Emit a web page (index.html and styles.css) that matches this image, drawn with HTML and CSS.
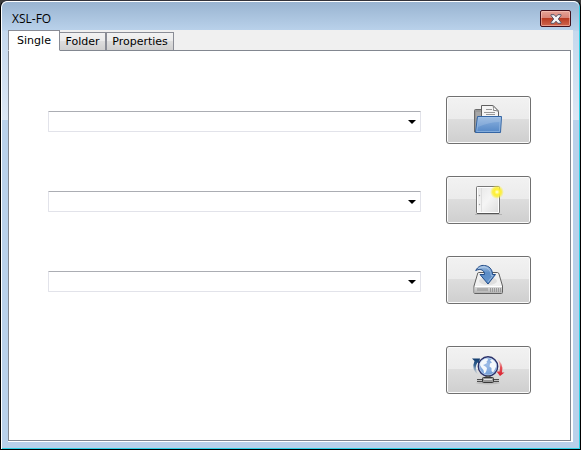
FILE: index.html
```html
<!DOCTYPE html>
<html lang="en">

<head>
  <meta charset="UTF-8">
  <meta name="viewport" content="width=device-width, initial-scale=1.0">
  <title>XSL-FO</title>
  <link rel="stylesheet" href="styles.css">
</head>

<body>
  <div class="window">
    <!-- Title bar -->
    <header class="titlebar">
      <h1>XSL-FO</h1>
      <button type="button" class="close" aria-label="Close">
        <svg width="12" height="10" viewBox="0 0 12 10">
          <path d="M1 .7H4.2L6 2.800 7.800 .7H11V1.600L8.300 5 11 8.400V9.300H7.800L6 7.200 4.200 9.300H1V8.400L3.700 5 1 1.600Z" fill="#f4f4f6" stroke="#575668" />
        </svg>
      </button>
    </header>

    <main class="client">
      <!-- Tabs -->
      <div class="tabs" role="tablist">
        <button type="button" class="tab active" role="tab" aria-selected="true">Single</button>
        <button type="button" class="tab folder" role="tab" aria-selected="false">Folder</button>
        <button type="button" class="tab properties" role="tab" aria-selected="false">Properties</button>
      </div>

      <form class="panel" role="tabpanel">
        <div class="row">
          <div class="combo">
            <select id="source" aria-label="Source file">
              <option></option>
            </select>
          </div>
          <button type="button" class="action" aria-label="Open">
            <svg width="31" height="32" viewBox="0 0 31 32">
              <defs>
                <linearGradient id="folderBlue" x1="0" y1="0" x2="0" y2="1">
                  <stop offset="0" stop-color="#8fb4e0" />
                  <stop offset="1" stop-color="#5487c6" />
                </linearGradient>
              </defs>
              <path d="M1.500 28V6.500Q1.500 5.500 2.500 5.500H8L10 7.500H25V28Z" fill="#989898" stroke="#6b6b6b" />
              <path d="M3 9H8M3 11H8M3 13H8" stroke="#b5b5b5" />
              <path d="M8.500 18V1.500H20L25.500 7V18Z" fill="#f5f5f5" stroke="#606060" />
              <path d="M20 1.500Q21 5 20.500 6.500 23 6 25.500 7.500Z" fill="#fff" stroke="#888" />
              <path d="M13 5.500H19M11 8.500H22M13 10.500H22" stroke="#999" />
              <path d="M4.500 12.500H28.500L27.500 28.500H2.500Z" fill="url(#folderBlue)" stroke="#3465a4" stroke-linejoin="round" />
              <path d="M5.500 13.500H27.400L26.500 27.500H3.700Z" fill="none" stroke="#c3dbf5" stroke-opacity=".4" />
              <path d="M6 14H27L26.500 18Q17 18 5 23Z" fill="#fff" fill-opacity=".15" />
            </svg>
          </button>
        </div>

        <div class="row">
          <div class="combo">
            <select id="stylesheet" aria-label="Stylesheet">
              <option></option>
            </select>
          </div>
          <button type="button" class="action" aria-label="New">
            <svg width="31" height="32" viewBox="0 0 31 32">
              <defs>
                <linearGradient id="paper" x1="0" y1="0" x2="1" y2="1">
                  <stop offset="0" stop-color="#e6e6e6" />
                  <stop offset=".5" stop-color="#f5f5f5" />
                  <stop offset="1" stop-color="#dcdcdc" />
                </linearGradient>
                <radialGradient id="glow">
                  <stop offset="0" stop-color="#fffff0" />
                  <stop offset=".2" stop-color="#fff980" />
                  <stop offset=".4" stop-color="#fff030" />
                  <stop offset=".65" stop-color="#fbee30" stop-opacity=".8" />
                  <stop offset="1" stop-color="#fff040" stop-opacity="0" />
                </radialGradient>
              </defs>
              <path d="M2 30.500H29" stroke="#000" stroke-opacity=".15" />
              <rect x="3.500" y="2.500" width="23" height="27" rx="1" fill="url(#paper)" stroke="#777" />
              <path d="M4 29.500H26" stroke="#555" />
              <path d="M4.500 28.500V3.500H25.500V28.500Z" fill="none" stroke="#fff" />
              <path d="M8.500 4V28" stroke="#dedede" />
              <circle cx="6.500" cy="11.500" r=".7" fill="#aaa" />
              <circle cx="6.500" cy="20.500" r=".7" fill="#aaa" />
              <circle cx="24" cy="8" r="7" fill="url(#glow)" />
            </svg>
          </button>
        </div>

        <div class="row">
          <div class="combo">
            <select id="output" aria-label="Output file">
              <option></option>
            </select>
          </div>
          <button type="button" class="action" aria-label="Save">
            <svg width="31" height="32" viewBox="0 0 31 32">
              <defs>
                <linearGradient id="driveSide" x1="0" y1="0" x2="0" y2="1">
                  <stop offset="0" stop-color="#dadada" />
                  <stop offset="1" stop-color="#b5b5b5" />
                </linearGradient>
                <linearGradient id="arrowBlue" x1="0" y1="0" x2="0" y2="1">
                  <stop offset="0" stop-color="#a9c5e4" />
                  <stop offset=".4" stop-color="#5b8cc6" />
                  <stop offset="1" stop-color="#6596cf" />
                </linearGradient>
              </defs>
              <path d="M5.500 8.500H24.500Q25.500 8.500 26 10L29.500 22V28.500Q29.500 29.500 28.500 29.500H2Q1 29.500 1 28.500V22L4.500 10Q4.700 8.500 5.500 8.500Z" fill="#f1f1f1" stroke="#606060" />
              <path d="M1.500 22.500H29V28.500Q29 29 28.500 29H2Q1.500 29 1.500 28.500Z" fill="url(#driveSide)" />
              <path d="M2 22.500H29" stroke="#fff" />
              <ellipse cx="15" cy="17" rx="9" ry="4" fill="#dedede" />
              <path d="M4 25.500H15" stroke="#999" stroke-width="3" stroke-opacity=".6" />
              <path d="M17.500 24V28M19.500 24V28M21.500 24V28M23.500 24V28M25.500 24V28M27.500 24V28" stroke="#999" />
              <path d="M2.700 6.500C5 2.500 8 1 11.500 1.500 16 2 19.500 5 19.500 10.500H22.500L15 20 7 10.500H11.500C11.500 6.500 8 4 2.700 6.500Z" fill="url(#arrowBlue)" stroke="#204a87" stroke-linejoin="round" />
              <path d="M5 4.700Q12 1 16 5.500 18.300 8 18.300 11.500H20L15 18" fill="none" stroke="#c7dcf2" stroke-opacity=".5" />
            </svg>
          </button>
        </div>

        <div class="row submit">
          <button type="button" class="action" aria-label="Transform">
            <svg width="31" height="32" viewBox="0 0 31 32">
              <defs>
                <radialGradient id="globe" cx=".45" cy=".4" r=".65">
                  <stop offset="0" stop-color="#9dbde8" />
                  <stop offset=".7" stop-color="#7ba3d9" />
                  <stop offset="1" stop-color="#5a82bd" />
                </radialGradient>
                <linearGradient id="navy" x1="0" y1="0" x2="0" y2="1">
                  <stop offset="0" stop-color="#123c6e" />
                  <stop offset=".4" stop-color="#32608f" />
                  <stop offset="1" stop-color="#7798bb" stop-opacity="0" />
                </linearGradient>
                <linearGradient id="red" x1="0" y1="0" x2="0" y2="1">
                  <stop offset="0" stop-color="#e86b6b" stop-opacity=".1" />
                  <stop offset=".5" stop-color="#e34f57" />
                  <stop offset="1" stop-color="#d91e2c" />
                </linearGradient>
              </defs>
              <path d="M-1 4.500H7L6 10 4.500 8.500Q1 13 5 21 -2 15 1.500 7Z" fill="url(#navy)" />
              <path d="M24 5Q31 9 29 18.500H31.500L27 22 23.500 17.500H26.500Q28 10 24 5Z" fill="url(#red)" />
              <ellipse cx="15" cy="29" rx="12" ry="1.500" fill="#000" fill-opacity=".12" />
              <circle cx="15" cy="12.500" r="9.700" fill="url(#globe)" stroke="#2c3168" stroke-width="1.400" />
              <path d="M8 7Q11 4 14.500 4.500L15 6 13.500 7.500 14 9 11.500 10.500 10 11 12.500 12.500 14 14 13.500 16.500 12 19.500 11 19 10.500 16 8 13 6.500 10Z" fill="#f4f8fc" />
              <path d="M17 6.500L19 5Q22.500 7 23.500 10L23 13 21 17 20 18.500 18.500 17 18.500 14 16.500 12.500 17 9.500 19 8.500Z" fill="#f4f8fc" />
              <circle cx="15" cy="12.500" r="8.500" fill="none" stroke="#c9dcf5" stroke-opacity=".6" />
              <path d="M13 22H17V24H13Z" fill="#777" stroke="#444" />
              <path d="M4 25.500H26M4 27.500H26" stroke="#4c4c4c" />
              <path d="M4 26.500H26" stroke="#c0c0c0" />
              <rect x="9.500" y="23.500" width="11" height="5" rx="1" fill="#999" stroke="#383838" />
              <path d="M11 25.500H19" stroke="#e0e0e0" />
            </svg>
          </button>
        </div>
      </form>
    </main>
  </div>
</body>

</html>
```
FILE: styles.css
```css
* {
  box-sizing: border-box;
}

body {
  margin: 0;
  background-color: #3c3c3c;
  font-family: "DejaVu Sans", Verdana, sans-serif;
  font-size: 11px;
  color: #000;
}

/* Window frame */
.window {
  display: flex;
  flex-direction: column;
  min-height: 100vh;
  padding: 0 7px 7px;
  border: 1px solid #000;
  border-top-color: #33333b;
  border-radius: 7px 7px 0 0;
  background: linear-gradient(#9ab5d3 0, #b8cfe8 29px, #c5d8ed 30px, #dce7f4 119px, #b9d1ea 119px);
  box-shadow: inset 1px 1px #fff, inset -1px -1px #2fd0e4;
}

.titlebar {
  display: flex;
  align-items: flex-start;
  justify-content: space-between;
  height: 29px;
  padding: 8px 8px 0 10px;
  margin: 0 -6px;
  border-top: 1px solid #fff;
  border-radius: 6px 6px 0 0;
  background: linear-gradient(#99b4d1, #b9d1ea);
}

.titlebar h1 {
  margin: 0;
  font-family: "Open Sans", "Segoe UI", sans-serif;
  font-size: 12px;
  font-weight: normal;
  line-height: 18px;
}

.close {
  display: flex;
  align-items: center;
  justify-content: center;
  width: 31px;
  height: 17px;
  padding: 0;
  border: 1px solid #43101c;
  border-radius: 2px;
  background: linear-gradient(#e5a498 0, #d98579 45%, #b93c24 50%, #d0664e 100%);
  box-shadow: inset 0 0 0 1px rgba(255, 210, 200, 0.5);
}

/* Client area */
.client {
  display: flex;
  flex: 1;
  flex-direction: column;
  padding: 0 2px 1px 0;
  background: linear-gradient(#f0f0f0 20px, #fff 20px);
}

.tabs {
  display: flex;
  align-items: flex-end;
  height: 21px;
  margin-bottom: -1px;
}

.tab {
  height: 19px;
  padding: 0;
  border: 1px solid #898c95;
  background: linear-gradient(#f2f2f2, #ebebeb 45%, #dddddd 50%, #cfcfcf);
  font-family: inherit;
  font-size: 11px;
  line-height: 17px;
  color: #000;
}

.tab.active {
  width: 52px;
  height: 21px;
  padding-bottom: 1px;
  border-bottom-color: #fff;
  background: #fff;
  z-index: 1;
}

.tab.folder {
  width: 46px;
  border-left: 0;
}

.tab.properties {
  width: 68px;
}

.panel {
  display: flex;
  flex: 1;
  flex-direction: column;
  gap: 32px;
  padding: 45px 39px;
  border: 1px solid #828790;
  background: #fff;
}

.row {
  display: flex;
  align-items: center;
  gap: 25px;
}

.row.submit {
  justify-content: flex-end;
  margin-top: 10px;
}

/* Combo boxes */
.combo {
  position: relative;
  flex: 1;
  height: 21px;
  margin-top: 3px;
}

.combo::after {
  content: "";
  position: absolute;
  top: 9px;
  right: 5px;
  border: 4px solid transparent;
  border-top-color: #000;
  border-bottom: 0;
  pointer-events: none;
}

.combo select {
  display: block;
  width: 100%;
  height: 100%;
  padding: 0 18px 0 4px;
  border: 1px solid #e2e3ea;
  border-top-color: #abadb3;
  border-radius: 1px;
  background: #fff;
  font: inherit;
  appearance: none;
}

/* Icon buttons */
.action {
  display: flex;
  align-items: center;
  justify-content: center;
  width: 85px;
  height: 48px;
  padding: 0;
  border: 1px solid #707070;
  border-radius: 3px;
  background: linear-gradient(#f2f2f2 0, #ebebeb 48%, #dddddd 48%, #cfcfcf 100%);
  box-shadow: inset 0 0 0 1px #fbfbfb;
}

.action svg {
  overflow: visible;
}
```
